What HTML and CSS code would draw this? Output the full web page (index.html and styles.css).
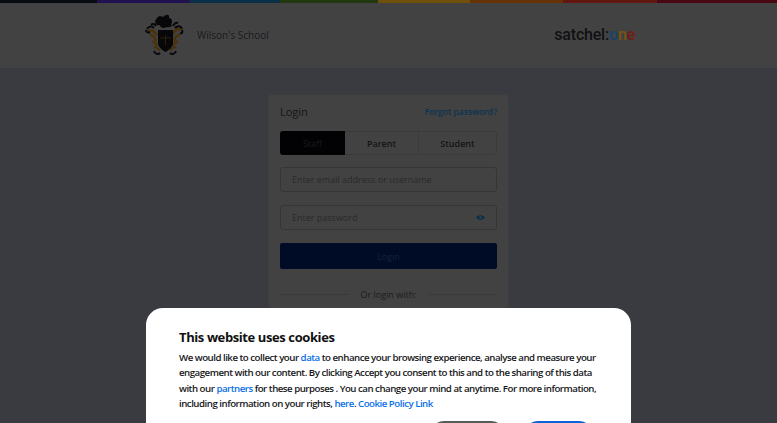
FILE: index.html
```html
<!DOCTYPE html>
<html lang="en">
<head>
    <meta charset="UTF-8">
    <meta name="viewport" content="width=device-width, initial-scale=1.0">
    <title>Satchel One Login</title>
    <link rel="stylesheet" href="styles.css">
</head>
<body>
    <div class="stripe">
        <span class="s1"></span><span class="s2"></span><span class="s3"></span><span class="s4"></span>
        <span class="s5"></span><span class="s6"></span><span class="s7"></span><span class="s8"></span>
    </div>
    <header class="header">
        <div class="school">
            <svg class="crest" width="40" height="42" viewBox="0 0 40 42">
                <!-- mantling -->
                <path d="M3 17 C7 15 10 18 12 21 M5 21 C8 21 10 24 11 27 M7 28 C9 27 11 29 12 32 M36 16 C32 14 29 17 27 21 M35 21 C32 21 30 24 29 27 M33 28 C31 27 29 29 28 32" fill="none" stroke="#4a3209" stroke-width="2.500"/>
                <path d="M9 34 C11 32 13 34 15 37 M31 34 C29 32 27 34 25 37" fill="none" stroke="#46300a" stroke-width="2"/>
                <path d="M2 15 C4 12 7 12 9 14 M6 11 C8 9 10 10 11 12 M37 15 C36 12 33 11 30 14 M33 9 C31 8 29 10 28 12 M9 37 C10 40 13 41 15 39 M31 37 C30 40 27 41 25 39 M1 16 C1 18 3 19 5 18 M37 16 C38 18 37 20 35 19" fill="none" stroke="#08080b" stroke-width="2"/>
                <!-- helm and beast -->
                <path d="M13 3 C15 1 17 3 18 3 C21 0 25 0 24 4 C27 4 28 8 26 10 C28 12 25 14 22 13 C19 15 15 14 15 11 C12 12 10 10 10 7 C11 5 12 4 13 3Z" fill="#07070a"/>
                <!-- shield -->
                <path d="M13 16 L28 16 L28 29 C28 33 24 36 20.500 38 C17 36 13 33 13 29Z" fill="#07070a"/>
                <path d="M15 24 L26 24 M20.500 21 L20.500 31" stroke="#2c1f0a" stroke-width="1"/>
            </svg>
            <span class="school-name">Wilson's School</span>
        </div>
        <div class="brand">satchel:<span class="o">o</span><span class="n">n</span><span class="e">e</span></div>
    </header>

    <main class="page">
        <section class="card">
            <div class="card-top">
                <h1 class="card-title">Login</h1>
                <a class="forgot">Forgot password?</a>
            </div>
            <div class="tabs">
                <div class="tab tab-active">Staff</div>
                <div class="tab tab-parent">Parent</div>
                <div class="tab tab-student">Student</div>
            </div>
            <div class="field">Enter email address or username</div>
            <div class="field">
                Enter password
                <svg width="9" height="7" viewBox="0 0 10 8">
                    <path d="M0 4 C2 .5 8 .5 10 4 C8 7.500 2 7.500 0 4Z" fill="#0b2f48"/>
                    <circle cx="5" cy="4" r="1.300" fill="#424242"/>
                </svg>
            </div>
            <div class="login-btn">Login</div>
            <div class="divider"><span>Or login with:</span></div>
            <div class="sso"></div>
        </section>
    </main>

    <div class="overlay">
        <div class="cookie">
            <h2 class="cookie-title">This website uses cookies</h2>
            <p class="cookie-text">We would like to collect your <a>data</a> to enhance your browsing experience, analyse and measure your engagement with our content. By clicking Accept you consent to this and to the sharing of this data with our <a>partners</a> for these purposes . You can change your mind at anytime. For more information, including information on your rights, <a>here</a>. <a>Cookie Policy Link</a></p>
            <div class="cookie-actions">
                <div class="cookie-btn btn-reject"></div>
                <div class="cookie-btn btn-accept"></div>
            </div>
        </div>
    </div>
</body>
</html>
```

FILE: styles.css
```css
* {
    margin: 0;
    padding: 0;
    box-sizing: border-box;
}

html, body {
    height: 423px;
    overflow: hidden;
}

body {
    font-family: 'Open Sans', sans-serif;
    background-color: #393b40;
    color: #141416;
}

.stripe {
    display: flex;
    height: 3px;
}

.stripe span { height: 100%; }
.s1 { width: 97px; background-color: #090b12; }
.s2 { width: 93px; background-color: #221150; }
.s3 { width: 90px; background-color: #0a3049; }
.s4 { width: 98px; background-color: #23370f; }
.s5 { width: 92px; background-color: #6f500c; }
.s6 { width: 93px; background-color: #663205; }
.s7 { width: 94px; background-color: #621710; }
.s8 { flex: 1; background-color: #480812; }

.header {
    height: 65px;
    background-color: #424242;
    display: flex;
    justify-content: space-between;
    align-items: center;
    padding: 0 142px 2px 145px;
}

.school {
    display: flex;
    align-items: center;
    gap: 12px;
}

.school-name {
    font-size: 10px;
    color: #1a1a1e;
}

.brand {
    font-family: 'Roboto', sans-serif;
    font-size: 16px;
    font-weight: 500;
    color: #111113;
    letter-spacing: -0.2px;
}

.o { color: #12456a; }
.n { color: #7a5310; }
.e { color: #741b14; }

.page {
    display: flex;
    justify-content: center;
    padding-top: 26px;
}

.card {
    width: 241px;
    height: 320px;
    background-color: #424242;
    border: 1px solid #3d3d3f;
    border-radius: 3px;
    padding: 0 11px;
}

.card-top {
    display: flex;
    justify-content: space-between;
    align-items: center;
    height: 36px;
    padding-bottom: 3px;
}

.card-title {
    font-size: 11px;
    font-weight: 400;
    color: #141416;
}

.forgot {
    font-size: 8.500px;
    font-weight: 600;
    color: #0b3352;
}

.tabs {
    display: flex;
    height: 24px;
    border: 1px solid #3b3b3b;
    border-radius: 3px;
    font-size: 9px;
    font-weight: 600;
    margin-bottom: 12px;
}

.tab {
    display: flex;
    align-items: center;
    justify-content: center;
    color: #141416;
}

.tab-active {
    width: 65px;
    margin: -1px 0 -1px -1px;
    background-color: #020204;
    color: #1a1a1f;
    font-weight: 400;
    border-radius: 3px 0 0 3px;
}

.tab-parent {
    width: 74px;
    border-right: 1px solid #3b3b3b;
}

.tab-student { flex: 1; }

.field {
    display: flex;
    justify-content: space-between;
    align-items: center;
    height: 25px;
    border: 1px solid #363636;
    border-radius: 3px;
    padding: 0 11px;
    margin-bottom: 13px;
    font-size: 9px;
    color: #29292c;
}

.login-btn {
    display: flex;
    align-items: center;
    justify-content: center;
    height: 26px;
    background-color: #000c26;
    border-radius: 2px;
    font-size: 9px;
    color: #16213a;
}

.divider {
    display: flex;
    align-items: center;
    gap: 11px;
    margin: 19px 0 7px;
    font-size: 9px;
    color: #1c1c1f;
}

.divider::before,
.divider::after {
    content: "";
    flex: 1;
    border-top: 1px solid #3a3a3a;
}

.sso {
    height: 30px;
    border: 1px solid #363636;
    border-radius: 3px;
}

.overlay {
    position: absolute;
    left: 146px;
    top: 308px;
    width: 485px;
    height: 115px;
    overflow: hidden;
}

.cookie {
    height: 150px;
    background-color: #fff;
    border-radius: 17px;
    padding: 19px 33px;
    color: #17171a;
}

.cookie-title {
    font-size: 13px;
    font-weight: 700;
    line-height: 20px;
    letter-spacing: -0.4px;
    margin-bottom: 3px;
    color: #111;
}

.cookie-text {
    font-size: 9.700px;
    font-weight: 600;
    line-height: 15.300px;
    letter-spacing: -0.5px;
}

.cookie-text a { color: #0a6fe8; }

.cookie-actions {
    display: flex;
    justify-content: flex-end;
    gap: 19px;
    margin-top: 10px;
    padding-right: 5px;
}

.cookie-btn {
    height: 28px;
    border-radius: 14px;
}

.btn-reject {
    width: 75px;
    background-color: #5a5a5a;
}

.btn-accept {
    width: 69px;
    background-color: #0a63d8;
}
```
